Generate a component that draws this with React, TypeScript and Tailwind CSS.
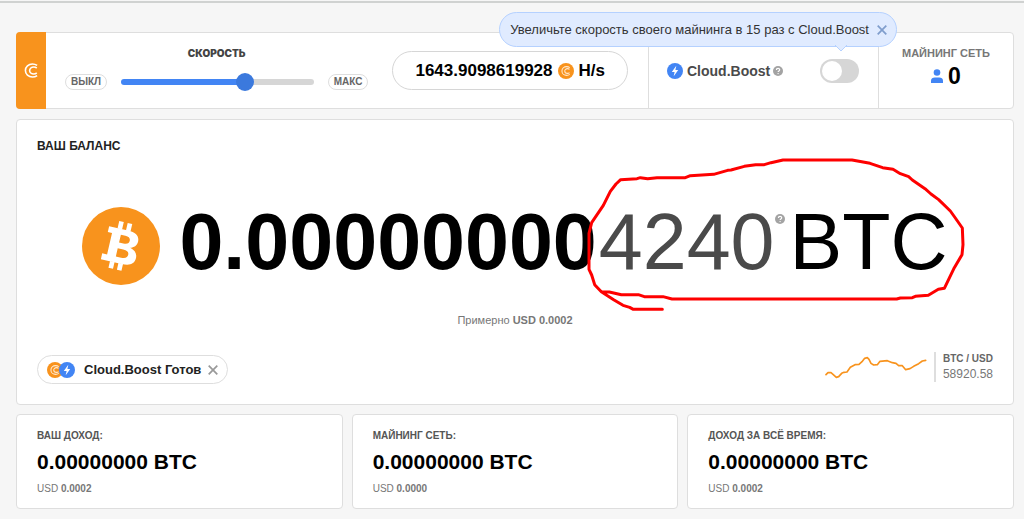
import React, { useState } from 'react';

interface Stat {
  id: string;
  label: string;
  amount: string;
  usd: string;
}

const STATS: Stat[] = [
  { id: 'income', label: 'ВАШ ДОХОД:', amount: '0.00000000 BTC', usd: '0.0002' },
  { id: 'network', label: 'МАЙНИНГ СЕТЬ:', amount: '0.00000000 BTC', usd: '0.0000' },
  { id: 'total', label: 'ДОХОД ЗА ВСЁ ВРЕМЯ:', amount: '0.00000000 BTC', usd: '0.0002' },
];

function BitcoinLogo({ className }: { className: string }) {
  return (
    <svg viewBox="-117 -117 234 234" className={className} aria-hidden="true">
      <circle r="117" fill="#f8931d" />
      <g transform="rotate(13)" fill="#fff">
        <path
          fillRule="evenodd"
          d="M-48-50H10C36-50 47-40 47-24 47-12 39-4 28-1 44 3 52 12 52 26 52 44 38 52 14 52H-50V34H-35V-32H-48ZM-8-33V-9H5C18-9 22-14 22-21S18-33 6-33ZM-8 9V34H8C22 34 27 29 27 21S22 9 9 9Z"
        />
        <path d="M-22-72H-8V-49H-22ZM4-72H18V-48H4ZM-22 51H-8V72H-22ZM4 51H18V72H4Z" />
      </g>
    </svg>
  );
}

function CMark({ className }: { className: string }) {
  return (
    <svg viewBox="0 0 16 16" className={className} fill="none" stroke="currentColor" strokeWidth="1.7" aria-hidden="true">
      <path d="M14 2.6C12.500 1.500 10.800 1 9 1 4.800 1 1.500 4.100 1.500 8s3.300 7 7.500 7c1.800 0 3.500-.5 5-1.600" />
      <path d="M13.600 5.400C12.800 4.600 11.600 4.200 10.400 4.200 7.900 4.200 6 5.900 6 8s1.900 3.800 4.400 3.800c1.200 0 2.400-.4 3.200-1.200" />
    </svg>
  );
}

function CoinIcon({ className }: { className: string }) {
  return (
    <span className={`flex items-center justify-center rounded-full bg-[#f8931d] text-[#ffe9cf] ${className}`}>
      <CMark className="size-[10px]" />
    </span>
  );
}

function BoltIcon({ className }: { className: string }) {
  return (
    <svg viewBox="0 0 16 16" className={className} aria-hidden="true">
      <circle cx="8" cy="8" r="8" fill="#4285f4" />
      <path d="M9.3 2.8 4.8 8.9h2.8l-.9 4.3 4.5-6.1H8.4z" fill="#fff" />
    </svg>
  );
}

function HelpIcon() {
  return (
    <svg viewBox="0 0 10 10" className="size-[10px]" aria-hidden="true">
      <circle cx="5" cy="5" r="5" fill="#a3a3a3" />
      <path d="M3.4 3.9C3.4 1.9 6.7 1.9 6.7 3.8 6.7 4.9 5.1 4.9 5.1 6" fill="none" stroke="#fff" strokeWidth="1.2" />
      <circle cx="5.1" cy="7.6" r="0.7" fill="#fff" />
    </svg>
  );
}

function CloseIcon() {
  return (
    <svg viewBox="0 0 10 10" className="size-[10px]" fill="none" stroke="currentColor" strokeWidth="1.7" aria-hidden="true">
      <path d="M.7.7 9.3 9.3M9.3.7.7 9.3" />
    </svg>
  );
}

function SpeedControl() {
  const [speed, setSpeed] = useState(66);

  return (
    <div className="flex flex-1 flex-col items-center pt-[13px] pl-[19px]">
      <label htmlFor="speed" className="font-[Inter] text-[10px] leading-[14px] font-black text-[#444]">
        СКОРОСТЬ
      </label>
      <div className="mt-[14px] flex w-full items-center justify-between">
        <span className="rounded-full border border-[#dedede] px-[5px] text-[10px] leading-[14px] font-bold text-[#666]">ВЫКЛ</span>
        <input
          id="speed"
          type="range"
          min={0}
          max={100}
          value={speed}
          onChange={(e) => setSpeed(Number(e.target.value))}
          className="mx-[14px] h-[6px] min-w-0 flex-1 appearance-none rounded-full [&::-webkit-slider-thumb]:size-[18px] [&::-webkit-slider-thumb]:appearance-none [&::-webkit-slider-thumb]:rounded-full [&::-webkit-slider-thumb]:bg-[#3b79dd]"
          style={{ background: `linear-gradient(to right, #4285f4 ${speed}%, #d6d6d6 ${speed}%)` }}
        />
        <span className="rounded-full border border-[#dedede] px-[5px] text-[10px] leading-[14px] font-bold text-[#666]">МАКС</span>
      </div>
    </div>
  );
}

function BoostControl() {
  const [enabled, setEnabled] = useState(false);
  const [tipOpen, setTipOpen] = useState(true);

  return (
    <div className="relative flex w-[230px] items-start border-l border-[#dedede] pt-[26px] pr-[19px] pl-[18px]">
      <label htmlFor="boost" className="flex items-center text-[14px] leading-6 font-bold text-[#4a4a4a]">
        <BoltIcon className="mr-1 size-4" />
        Cloud.Boost
      </label>
      <span className="mt-[7px] ml-[3px]">
        <HelpIcon />
      </span>
      <input
        id="boost"
        type="checkbox"
        role="switch"
        checked={enabled}
        onChange={(e) => setEnabled(e.target.checked)}
        className="ml-auto h-6 w-[39px] appearance-none rounded-full bg-[#d6d6d6] p-[2px] before:block before:size-5 before:rounded-full before:bg-white checked:bg-[#4285f4] checked:before:ml-[15px]"
      />
      {tipOpen && (
        <div className="absolute -top-[21px] -right-[19px] flex h-[35px] items-center rounded-full border border-[#b5d1ff] bg-[#e0ebff] pr-[9px] pl-[10px] text-[13px] whitespace-nowrap text-[#333]">
          Увеличьте скорость своего майнинга в 15 раз с Cloud.Boost
          <button type="button" aria-label="Закрыть подсказку" className="ml-[8px] text-[#7f9dcc]" onClick={() => setTipOpen(false)}>
            <CloseIcon />
          </button>
          <svg viewBox="0 0 12 7" className="absolute right-[49px] -bottom-[6px] h-[7px] w-3" aria-hidden="true">
            <path d="M0 0 6 6 12 0" fill="#e0ebff" stroke="#b5d1ff" />
          </svg>
        </div>
      )}
    </div>
  );
}

function TopBar() {
  return (
    <header className="flex h-[77px] rounded border border-[#dedede] bg-white">
      <div className="-my-px -ml-px flex w-[30px] items-center justify-center rounded-l bg-[#f8931d] text-white">
        <CMark className="size-[15px]" />
      </div>
      <SpeedControl />
      <div className="flex items-center pr-5 pl-6">
        <div className="flex h-[39px] items-center rounded-full border border-[#d6d6d6] px-[22px] text-[17px] font-bold text-black">
          1643.9098619928
          <CoinIcon className="mx-[5px] size-4" />
          H/s
        </div>
      </div>
      <BoostControl />
      <div className="flex w-[135px] flex-col items-center border-l border-[#dedede] pt-[12px]">
        <span className="text-[11px] leading-4 font-bold text-[#777]">МАЙНИНГ СЕТЬ</span>
        <span className="mt-[1px] flex items-center gap-[5px] text-[23px] leading-7 font-bold text-black">
          <svg viewBox="0 0 12 14" className="h-[14px] w-3" fill="#4285f4" aria-hidden="true">
            <circle cx="6" cy="3.5" r="3.3" />
            <path d="M0 14v-2.400C0 9.500 1.700 8.500 3.800 8.500h4.400C10.300 8.500 12 9.500 12 11.600V14z" />
          </svg>
          0
        </span>
      </div>
    </header>
  );
}

function Balance() {
  const [noticeOpen, setNoticeOpen] = useState(true);

  return (
    <section className="flex h-[286px] flex-col rounded border border-[#dedede] bg-white px-5 pt-[17px] pb-5">
      <h2 className="text-[12px] leading-[18px] font-bold text-[#222]">ВАШ БАЛАНС</h2>
      <div className="mt-[51px] flex h-[80px] items-center justify-center whitespace-nowrap">
        <BitcoinLogo className="mr-[19px] size-[78px] shrink-0" />
        <div className="flex pb-[10px] text-[79px] leading-none">
          <span className="font-bold text-black">0.00000000</span>
          <div className="relative ml-[2px] flex">
            <span className="text-[#4a4a4a]">4240</span>
            <span className="mt-3">
              <HelpIcon />
            </span>
            <span className="ml-[5px] text-black">BTC</span>
            {/* marker stroke around the small digits */}
            <svg
              viewBox="0 0 1320 570"
              className="pointer-events-none absolute -top-[62px] -left-[38px] h-[190px] w-[440px] max-w-none"
              fill="none"
              stroke="#fe0000"
              strokeWidth="9"
              strokeLinejoin="round"
              strokeLinecap="round"
              aria-hidden="true"
            >
              <path d="M304 508H217L206 502 186 496 158 479 121 455 101 434 92 405 84 388V280L92 248 127 196 148 154 165 132 179 119 228 116 238 113 260 116 288 113H373L388 107 458 103 500 91 510 90 550 79 584 74 610 74 630 68 666 60H873L927 70 965 83 996 88 1018 101 1043 110 1054 120 1092 146 1110 162 1133 179 1168 213 1183 234 1204 264 1206 314 1203 344 1180 383 1150 445 1132 448 1102 466 1063 469 1054 473 1018 474 1007 477H333L306 470H250L232 464H181L145 456H124" />
            </svg>
          </div>
        </div>
      </div>
      <p className="mt-[26px] text-center text-[11px] leading-4 text-[#777]">
        Примерно <b>USD 0.0002</b>
      </p>
      <div className="mt-auto flex items-end justify-between">
        {noticeOpen ? (
          <div className="flex h-[29px] items-center rounded-full border border-[#dedede] px-[9px] text-[13px] font-bold text-[#222]">
            <CoinIcon className="size-4" />
            <BoltIcon className="-ml-1 size-4" />
            <span className="ml-[9px]">Cloud.Boost Готов</span>
            <button type="button" aria-label="Закрыть" className="ml-[7px] text-[#999]" onClick={() => setNoticeOpen(false)}>
              <CloseIcon />
            </button>
          </div>
        ) : (
          <span />
        )}
        <div className="mb-[2px] flex items-center">
          <svg viewBox="0 0 306 72" className="h-6 w-[102px]" fill="none" stroke="#f8931d" strokeWidth="5" strokeLinejoin="round" strokeLinecap="round" aria-hidden="true">
            <path d="M3 59 9 53 18 53 24 58 34 67 41 65 50 55 57 52 66 51 76 37 90 29 102 28 111 20 119 10 127 8 132 13 138 25 146 30 157 29 165 19 187 17 202 23 213 25 221 32 232 32 242 44 255 41 266 34 281 26 292 18 302 16" />
          </svg>
          <div className="ml-[7px] border-l-2 border-[#dedede] pl-[7px]">
            <div className="text-[10px] leading-[14px] font-bold text-[#666]">BTC / USD</div>
            <div className="text-[12px] leading-4 text-[#777]">58920.58</div>
          </div>
        </div>
      </div>
    </section>
  );
}

export default function App() {
  return (
    <div className="min-h-screen bg-[#f6f6f6] pt-px font-['Liberation_Sans',Arial,sans-serif]">
      <div className="border-t-2 border-[#d0d2d1] pt-[29px] pr-[10px] pb-[10px] pl-4">
        <TopBar />
        <main className="mt-[10px] space-y-[9px]">
          <Balance />
          <div className="grid grid-cols-3 gap-[9px]">
            {STATS.map((stat) => (
              <section key={stat.id} className="rounded border border-[#dedede] bg-white px-5 pt-[14px] pb-[12px]">
                <h3 className="text-[10px] leading-[14px] font-bold text-[#555]">{stat.label}</h3>
                <div className="mt-[7px] text-[21px] leading-6 font-bold text-black">{stat.amount}</div>
                <div className="mt-2 text-[10px] leading-[14px] text-[#777]">
                  USD <b>{stat.usd}</b>
                </div>
              </section>
            ))}
          </div>
        </main>
      </div>
    </div>
  );
}
